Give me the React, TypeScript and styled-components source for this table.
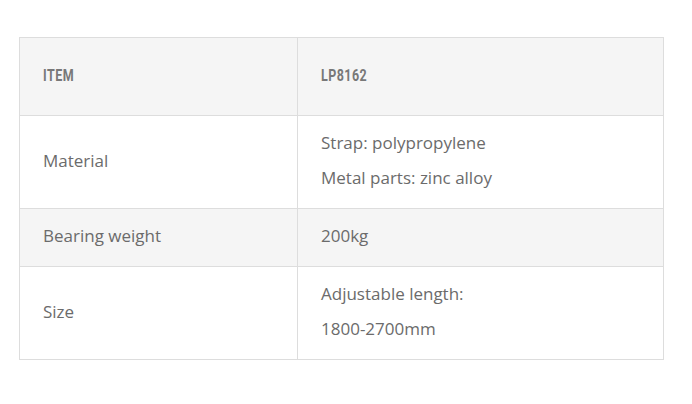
import React from "react";
import styled, { createGlobalStyle } from "styled-components";

const GlobalStyle = createGlobalStyle`
  body {
    margin: 0;
    background: #ffffff;
  }
`;

const rows = [
  { label: "Material", values: ["Strap: polypropylene", "Metal parts: zinc alloy"], shaded: false },
  { label: "Bearing weight", values: ["200kg"], shaded: true },
  { label: "Size", values: ["Adjustable length:", "1800-2700mm"], shaded: false },
];

const App = () => {
  return (
    <Page>
      <GlobalStyle />
      <SpecTable>
        <colgroup>
          <col style={{ width: 278 }} />
          <col />
        </colgroup>
        <thead>
          <tr>
            <HeadCell>
              <HeadLabel>ITEM</HeadLabel>
            </HeadCell>
            <HeadCell>
              <HeadLabel>LP8162</HeadLabel>
            </HeadCell>
          </tr>
        </thead>
        <tbody>
          {rows.map(row => (
            <Row key={row.label} shaded={row.shaded}>
              <Cell>{row.label}</Cell>
              <Cell>
                {row.values.map(v => (
                  <Line key={v}>{v}</Line>
                ))}
              </Cell>
            </Row>
          ))}
        </tbody>
      </SpecTable>
    </Page>
  );
};
export default App;

const Page = styled.div`
  padding: 37px 28px 0 19px;
`;

const SpecTable = styled.table`
  width: 100%;
  table-layout: fixed;
  border-collapse: collapse;
  border: 1px solid #dddddd;
`;

const HeadCell = styled.th`
  background: #f5f5f5;
  border: 1px solid #dddddd;
  padding: 20px 23px 22px;
  text-align: left;
  line-height: 35px;
`;

// condensed headline look
const HeadLabel = styled.span`
  display: inline-block;
  font-family: Roboto, sans-serif;
  font-weight: 700;
  font-size: 16px;
  letter-spacing: 0.6px;
  color: #787878;
  transform: scaleX(0.78);
  transform-origin: left center;
`;

const Row = styled.tr<{ shaded: boolean }>`
  background: ${p => (p.shaded ? "#f5f5f5" : "#ffffff")};
`;

const Cell = styled.td`
  border: 1px solid #dddddd;
  padding: 9px 23px 13px;
  font-family: "Open Sans", sans-serif;
  font-size: 17px;
  line-height: 35px;
  color: #6b6b6b;
  vertical-align: middle;
`;

const Line = styled.div``;
